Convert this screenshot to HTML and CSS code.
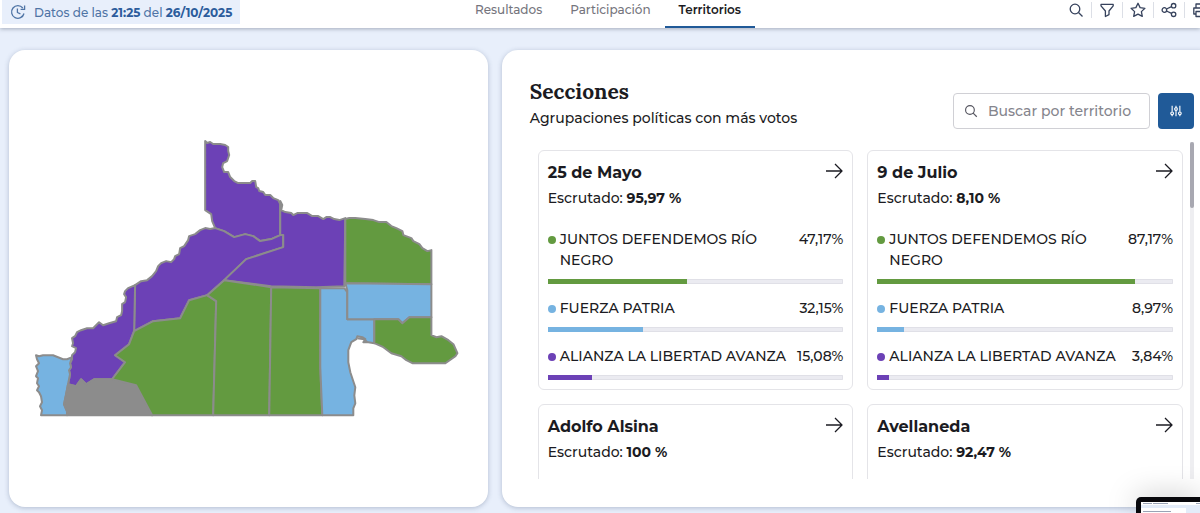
FILE: index.html
```html
<!DOCTYPE html>
<html lang="es">
<head>
  <meta charset="UTF-8">
  <meta name="viewport" content="width=device-width, initial-scale=1">
  <title>Resultados - Territorios</title>
  <link rel="stylesheet" href="styles.css">
</head>
<body>

  <header class="topbar">
    <div class="update">
      <svg class="update-icon" viewBox="0 0 16 16">
        <path d="M12.8 4A6.3 6.3 0 1 0 14 9.5M14.6 1.4v4h-4M7.4 4.5v4l3 1.3"/>
      </svg>
      <span>Datos de las <b>21:25</b> del <b>26/10/2025</b></span>
    </div>

    <nav class="tabs">
      <a href="#resultados">Resultados</a>
      <a href="#participacion">Participación</a>
      <a href="#territorios" class="active">Territorios</a>
    </nav>

    <div class="tools">
      <button aria-label="Buscar">
        <svg viewBox="0 0 16 16"><circle cx="7" cy="7" r="4.8"/><path d="M10.5 10.5l4 4"/></svg>
      </button>
      <button aria-label="Filtrar">
        <svg viewBox="0 0 16 16"><path d="M2 2.4h12.2v1.4L10 9v3.6l-3.6 1.9V9L2 3.8z"/></svg>
      </button>
      <button aria-label="Favoritos">
        <svg viewBox="0 0 16 16"><path d="M8 1.3l2.1 4.3 4.8.7-3.5 3.3.9 4.8L8 12.1l-4.3 2.3.9-4.8L1.1 6.3l4.8-.7z"/></svg>
      </button>
      <button aria-label="Compartir">
        <svg viewBox="0 0 16 16"><circle cx="3.4" cy="8" r="2.3"/><circle cx="12.6" cy="3.7" r="2.2"/><circle cx="12.6" cy="12.3" r="2.2"/><path d="M5.5 7l5-2.3M5.5 9l5 2.3"/></svg>
      </button>
      <button aria-label="Imprimir">
        <svg viewBox="0 0 16 16"><path d="M4 6V2h8v4M4 12H1.8V6h12.4v6H12M4 9.5h8v5H4z"/></svg>
      </button>
    </div>
  </header>

  <main class="content">
    <section class="panel map-panel">
      <svg class="map" viewBox="30 130 440 296" role="img" aria-label="Mapa de Río Negro">
        <path class="purple" d="M207 141L209 143 212 142 215 144 222 144 227 145 230 147 230 151 231 155 229 161 225 163 224 167 226 172 230 172 232 177 236 181 240 183 244 183 252 183 254 181 257 181 258 187 260 188 261 191 265 192 267 195 272 195 275 198 280 200 282 204 282 235 273 239 262 241 255 236 247 234 236 237 226 231 217 228 214 221 213 214 207 210z"/>
        <path class="purple" d="M137 285L143 281 149 280 154 276 158 271 160 266 163 263 168 261 173 262 176 259 177 256 181 254 182 248 186 246 190 240 191 236 197 234 202 230 207 228 212 229 217 228 226 231 236 237 247 234 255 236 262 241 273 239 282 235 285 235 285 247 248 259 226 280 209 295 191 300 182 318 155 321 136 331z"/>
        <path class="purple" d="M282 201L284 205 283 210 287 212 293 213 295 215 299 213 304 213 309 213 314 216 320 216 325 219 328 217 332 217 336 219 341 220 344 219 347 218 346 286 318 287 273 286 226 280 248 259 285 247 285 235 282 235z"/>
        <path class="purple" d="M137 285L130 288 127 291 126 294 128 297 127 302 124 304 124 311 123 315 119 317 118 321 111 323 105 325 101 322 97 326 95 328 89 328 83 330 79 332 77 336 74 338 75 343 74 346 78 348 77 352 74 355 74 359 72 363 73 367 71 370 72 374 70 384 78 386 83 379 88 384 96 379 114 379 127 362 117 355 131 344 136 331z"/>
        <path class="blue" d="M38 355L41 356 45 355 55 355 60 357 65 359 69 359 74 357 72 363 73 367 71 370 72 374 70 384 68 395 66 404 69 411 69 415 43 415 44 410 42 406 44 402 43 396 41 392 39 390 41 386 39 383 40 378 38 376 40 371 38 366 41 363 39 359z"/>
        <path class="grey" d="M70 384L78 386 83 379 88 384 96 379 114 379 138 385 154 415 69 415 69 411 66 404z"/>
        <path class="green" d="M136 331L155 321 182 318 191 300 209 295 218 301 215 415 154 415 138 385 114 379 127 362 117 355 131 344z"/>
        <path class="green" d="M209 295L226 280 273 287 271 415 215 415 218 301z"/>
        <path class="green" d="M273 287L322 288 322 367 324 415 271 415z"/>
        <path class="blue" d="M322 288L346 288 349 292 349 319 376 319 376 343 370 342 365 342 367 339 364 337 359 336 358 339 353 342 350 350 350 362 352 372 355 381 357 387 356 395 357 403 355 408 355 415 324 415 322 367z"/>
        <path class="green" d="M347 219L351 218 357 218 367 219 375 220 381 222 388 222 393 226 398 228 404 231 405 235 413 238 415 241 421 244 424 248 429 251 433 250 433 284 347 283z"/>
        <path class="blue" d="M347 283L433 284 433 317 411 317 404 323 400 319 349 319 349 290z"/>
        <path class="green" d="M376 319L400 319 404 323 411 317 433 317 433 335 438 337 443 336 450 340 455 344 459 353 457 356 447 363 414 363 408 360 403 356 393 353 385 347 376 343z"/>
        <path class="line" d="M359 338l7 1 3 3"/>
      </svg>
    </section>

    <section class="panel list-panel">
      <div class="list-header">
        <div>
          <h1>Secciones</h1>
          <p>Agrupaciones políticas con más votos</p>
        </div>
        <form class="search">
          <label class="search-box">
            <svg viewBox="0 0 16 16"><circle cx="6.8" cy="6.8" r="5"/><path d="M10.4 10.4l4.2 4.2"/></svg>
            <input type="text" placeholder="Buscar por territorio" aria-label="Buscar por territorio">
          </label>
          <button type="button" class="options-btn" aria-label="Opciones">
            <svg viewBox="0 0 14 14"><path d="M2.5 1v7M2.5 11.5V13M7 1v2M7 6.5V13M11.5 1v7M11.5 11.5V13"/><circle cx="2.5" cy="9.7" r="1.6"/><circle cx="7" cy="4.7" r="1.6"/><circle cx="11.5" cy="9.7" r="1.6"/></svg>
          </button>
        </form>
      </div>

      <div class="list-scroll">
        <div class="cards">
          <article class="card">
            <div class="card-title">
              <h2>25 de Mayo</h2>
              <a href="#25-de-mayo" aria-label="Ver 25 de Mayo"><svg viewBox="0 0 18 16"><path d="M1 8h16M10 1l7 7-7 7"/></svg></a>
            </div>
            <p class="counted">Escrutado: <b>95,97 %</b></p>
            <div class="party green">
              <div class="party-row"><span class="name">JUNTOS DEFENDEMOS RÍO NEGRO</span><span>47,17%</span></div>
              <div class="bar"><div class="fill" style="width: 47.17%"></div></div>
            </div>
            <div class="party blue">
              <div class="party-row"><span class="name">FUERZA PATRIA</span><span>32,15%</span></div>
              <div class="bar"><div class="fill" style="width: 32.15%"></div></div>
            </div>
            <div class="party purple">
              <div class="party-row"><span class="name">ALIANZA LA LIBERTAD AVANZA</span><span>15,08%</span></div>
              <div class="bar"><div class="fill" style="width: 15.08%"></div></div>
            </div>
          </article>

          <article class="card">
            <div class="card-title">
              <h2>9 de Julio</h2>
              <a href="#9-de-julio" aria-label="Ver 9 de Julio"><svg viewBox="0 0 18 16"><path d="M1 8h16M10 1l7 7-7 7"/></svg></a>
            </div>
            <p class="counted">Escrutado: <b>8,10 %</b></p>
            <div class="party green">
              <div class="party-row"><span class="name">JUNTOS DEFENDEMOS RÍO NEGRO</span><span>87,17%</span></div>
              <div class="bar"><div class="fill" style="width: 87.17%"></div></div>
            </div>
            <div class="party blue">
              <div class="party-row"><span class="name">FUERZA PATRIA</span><span>8,97%</span></div>
              <div class="bar"><div class="fill" style="width: 8.97%"></div></div>
            </div>
            <div class="party purple">
              <div class="party-row"><span class="name">ALIANZA LA LIBERTAD AVANZA</span><span>3,84%</span></div>
              <div class="bar"><div class="fill" style="width: 3.84%"></div></div>
            </div>
          </article>

          <article class="card">
            <div class="card-title">
              <h2>Adolfo Alsina</h2>
              <a href="#adolfo-alsina" aria-label="Ver Adolfo Alsina"><svg viewBox="0 0 18 16"><path d="M1 8h16M10 1l7 7-7 7"/></svg></a>
            </div>
            <p class="counted">Escrutado: <b>100 %</b></p>
          </article>

          <article class="card">
            <div class="card-title">
              <h2>Avellaneda</h2>
              <a href="#avellaneda" aria-label="Ver Avellaneda"><svg viewBox="0 0 18 16"><path d="M1 8h16M10 1l7 7-7 7"/></svg></a>
            </div>
            <p class="counted">Escrutado: <b>92,47 %</b></p>
          </article>
        </div>
        <div class="scrollbar"><div class="thumb"></div></div>
      </div>
    </section>
  </main>

  <!-- ventana flotante -->
  <div class="preview">
    <svg viewBox="0 0 59 11">
      <path class="sheet" d="M0 0h59v11H0z"/>
      <path class="area" d="M0 3h59v8H45V6H0z"/>
      <path class="lines" d="M2 1.500h9M12 1.500h15M55 1.500h4M2 9.500h28"/>
    </svg>
  </div>

</body>
</html>
```

FILE: styles.css
```css
* {
  box-sizing: border-box;
}

body {
  margin: 0;
  height: 100vh;
  overflow: hidden;
  display: flex;
  flex-direction: column;
  font-family: Montserrat, Inter, sans-serif;
  font-size: 14px;
  font-weight: 500;
  color: #1b1b22;
  background: #e8effb;
}

h1, h2, p {
  margin: 0;
}

svg {
  fill: none;
  stroke: currentColor;
  stroke-width: 1.3;
  stroke-linejoin: round;
}

button {
  border: none;
  background: none;
  cursor: pointer;
}

/* barra superior */
.topbar {
  flex: none;
  display: grid;
  grid-template-columns: 1fr auto 1fr;
  height: 28px;
  background: #fff;
  box-shadow: 0 1px 4px rgba(60, 70, 90, 0.4);
}

.update {
  justify-self: start;
  display: flex;
  align-items: center;
  gap: 8px;
  height: 24px;
  margin-left: 2px;
  padding: 0 8px;
  font-size: 12px;
  color: #4f74a5;
  background: #e8effb;
}

.update b {
  color: #2c5c9c;
}

.update-icon {
  width: 16px;
  height: 16px;
}

.tabs {
  display: flex;
  margin-left: 16px;
}

.tabs a {
  padding: 0 14px;
  font-size: 12px;
  line-height: 20px;
  color: #75757d;
  text-decoration: none;
}

.tabs .active {
  color: #1b1b22;
  font-weight: 600;
  border-bottom: 2px solid #205a98;
}

.tools {
  justify-self: end;
  display: flex;
  align-items: center;
  height: 20px;
  margin-right: -15px;
}

.tools button {
  display: flex;
  padding: 0 7px;
  color: #36425c;
}

.tools button + button {
  border-left: 1px solid #dcdfe6;
}

.tools svg {
  width: 16px;
  height: 16px;
}

/* paneles */
.content {
  flex: 1;
  min-height: 0;
  display: grid;
  grid-template-columns: 41fr 61fr;
  gap: 14px;
  margin-right: -14px;
  padding: 22px 0 6px 9px;
}

.panel {
  min-height: 0;
  background: #fff;
  border-radius: 16px;
  box-shadow: 0 1px 5px rgba(50, 70, 110, 0.3);
}

.map-panel {
  display: flex;
  align-items: center;
  justify-content: center;
}

.map {
  width: 92%;
}

.map path {
  stroke: #8c8c8c;
  stroke-width: 2;
}

.map .purple { fill: #6c41b6; }
.map .green { fill: #639a40; }
.map .blue { fill: #76b3e1; }
.map .grey { fill: #8c8c8c; }

.list-panel {
  display: flex;
  flex-direction: column;
  padding: 28px 20px 28px 28px;
}

.list-header {
  display: flex;
  justify-content: space-between;
  margin-bottom: 12px;
}

h1 {
  font-family: Lora, "Liberation Serif", serif;
  font-size: 21px;
  line-height: 28px;
}

.list-header p {
  line-height: 24px;
}

.search {
  display: flex;
  gap: 8px;
  height: 36px;
  margin-top: 15px;
}

.search-box {
  display: flex;
  align-items: center;
  gap: 10px;
  width: 197px;
  padding: 0 10px;
  border: 1px solid #d0d0d5;
  border-radius: 4px;
  color: #55555f;
}

.search-box svg {
  flex: none;
  width: 14px;
  height: 14px;
}

.search-box input {
  width: 100%;
  min-width: 0;
  padding: 0;
  border: none;
  outline: none;
  font: inherit;
  background: none;
}

.search-box input::placeholder {
  color: #85858d;
}

.options-btn {
  display: flex;
  align-items: center;
  justify-content: center;
  width: 36px;
  padding: 0;
  border-radius: 4px;
  color: #fff;
  background: #205a98;
}

.options-btn svg {
  width: 12px;
  height: 12px;
}

.list-scroll {
  flex: 1;
  min-height: 0;
  display: flex;
  gap: 7px;
  overflow: hidden;
}

.cards {
  flex: 1;
  display: grid;
  grid-template-columns: 1fr 1fr;
  grid-auto-rows: 240px;
  gap: 14px;
  padding: 8px 0 0 8px;
}

.card {
  padding: 9px;
  border: 1px solid #e4e4e8;
  border-radius: 6px;
}

.card-title {
  display: flex;
  align-items: center;
  justify-content: space-between;
}

h2 {
  font-size: 16px;
  line-height: 25px;
}

.card-title a {
  display: flex;
  padding-bottom: 3px;
  color: #1b1b22;
}

.card-title svg {
  width: 18px;
  height: 16px;
}

.counted {
  margin-bottom: 18px;
  line-height: 26px;
}

.party {
  margin-bottom: 14px;
}

.party.green { --color: #639a40; }
.party.blue { --color: #76b3e1; }
.party.purple { --color: #6c41b6; }

.party-row {
  display: flex;
  justify-content: space-between;
  line-height: 21px;
  margin-bottom: 8px;
}

.party-row::before {
  content: "";
  flex: none;
  width: 8px;
  height: 8px;
  margin: 7px 4px 0 0;
  border-radius: 4px;
  background: var(--color);
}

.name {
  flex: 1;
}

.bar {
  height: 5px;
  border-radius: 1px;
  background: #ebebf1;
  box-shadow: inset 0 0 0 1px #e0e0e7;
}

.fill {
  height: 100%;
  background: var(--color);
}

.scrollbar {
  width: 4px;
  background: #eeeef1;
}

.thumb {
  height: 66px;
  border-radius: 2px;
  background: #a8a8b1;
}

.preview {
  position: absolute;
  right: 0;
  bottom: 0;
  width: 64px;
  height: 16px;
  padding: 5px 0 0 5px;
  border-radius: 5px 0 0 0;
  background: #08080c;
  box-shadow: 0 0 30px rgba(0, 0, 0, 0.25);
}

.preview svg {
  display: block;
  width: 100%;
  height: 100%;
  stroke: none;
}

.preview .sheet { fill: #fff; }
.preview .area { fill: #e3ecf9; }

.preview .lines {
  stroke: #9aa3b5;
  stroke-width: 1;
}
```
